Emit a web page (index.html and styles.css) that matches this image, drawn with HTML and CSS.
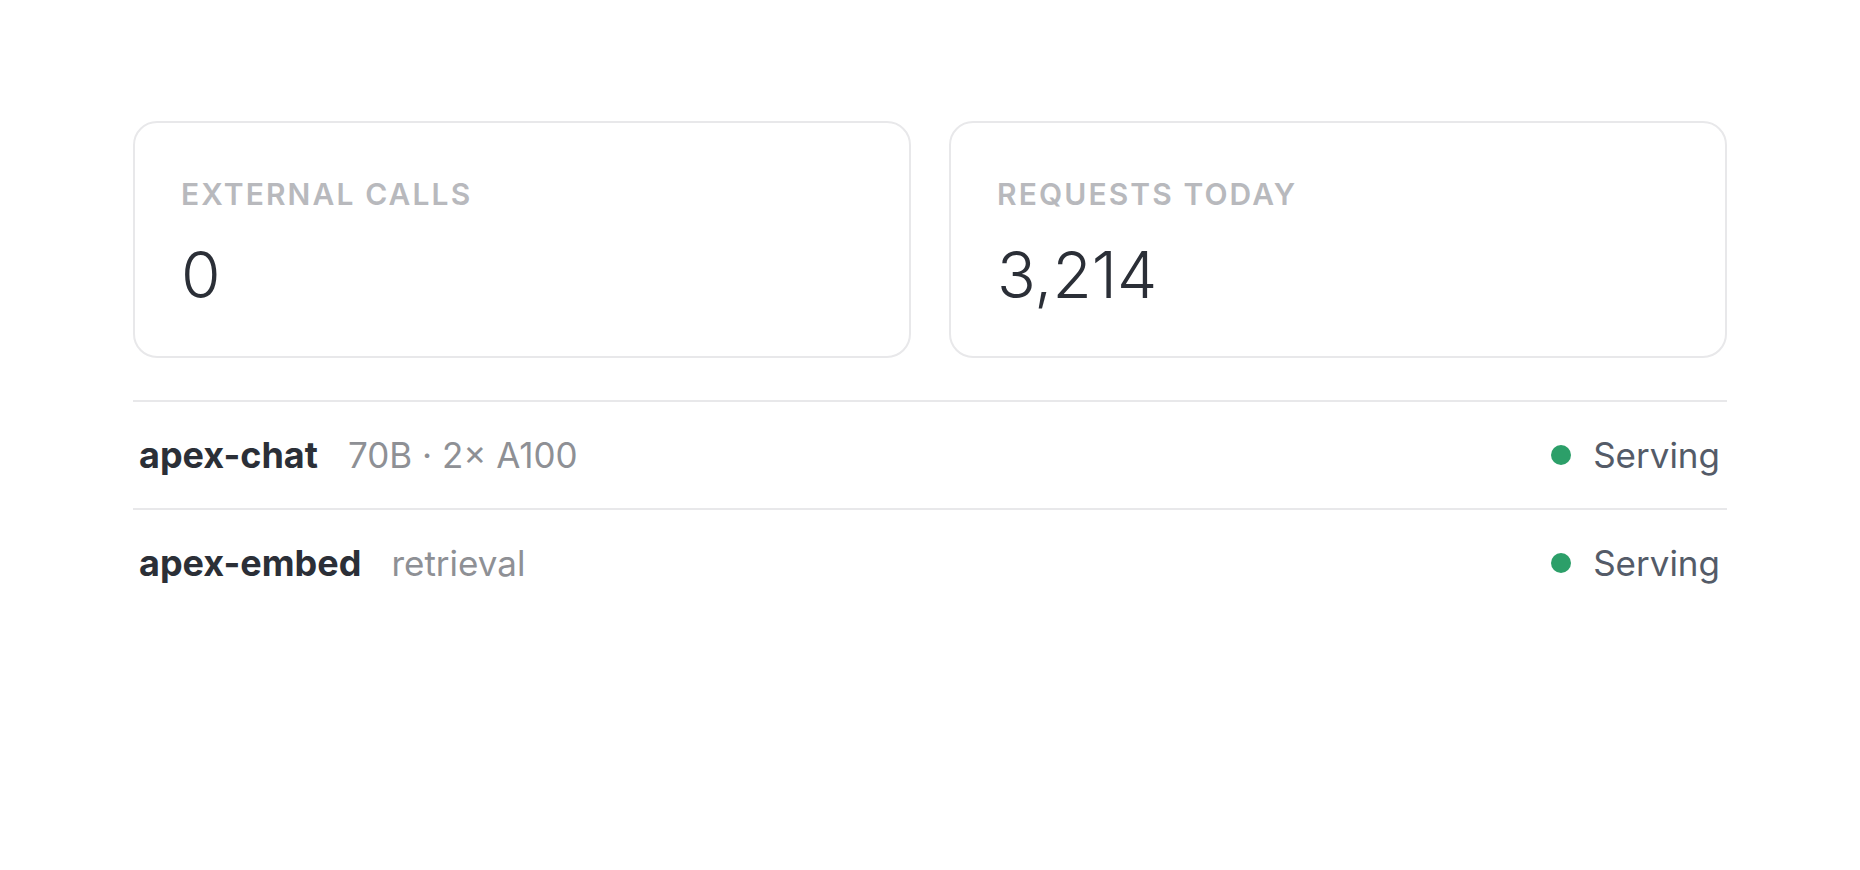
FILE: index.html
```html
<!DOCTYPE html>
<html>
    <head>
        <meta charset="UTF-8">
        <meta name="viewport" content="width=device-width, initial-scale=1">
        <title>Models</title>
        <link rel="stylesheet" href="styles.css">
    </head>
    <body>
        <div class="page">
            <div class="stats">
                <div class="stat-card">
                    <div class="stat-label">External calls</div>
                    <div class="stat-value">0</div>
                </div>
                <div class="stat-card">
                    <div class="stat-label">Requests today</div>
                    <div class="stat-value">3,214</div>
                </div>
            </div>

            <!-- lista de modelos -->
            <div class="model-list">
                <div class="model-row">
                    <span class="model-name">apex-chat</span>
                    <span class="model-meta">70B · 2× A100</span>
                    <span class="model-status"><span class="dot"></span>Serving</span>
                </div>
                <div class="model-row">
                    <span class="model-name">apex-embed</span>
                    <span class="model-meta">retrieval</span>
                    <span class="model-status"><span class="dot"></span>Serving</span>
                </div>
            </div>
        </div>
    </body>
</html>
```

FILE: styles.css
```css
body {
    margin: 0;
    background: #ffffff;
    font-family: Inter, Lato, sans-serif;
    color: #2b2f37;
}
.page {
    padding: 121px 133px;
}
.stats {
    display: grid;
    grid-template-columns: 1fr 1fr;
    gap: 38px;
}
.stat-card {
    border: 2px solid #e8e8ea;
    border-radius: 24px;
    padding: 52px 46px 44px;
    height: 237px;
    box-sizing: border-box;
}
.stat-label {
    font-size: 30px;
    font-weight: 600;
    letter-spacing: 0.07em;
    text-transform: uppercase;
    color: #b8b9bd;
    line-height: 38px;
}
.stat-value {
    font-size: 64px;
    font-weight: 300;
    line-height: 80px;
    margin-top: 22px;
    color: #2b2f37;
}
.model-list {
    margin-top: 42px;
}
.model-row {
    display: flex;
    align-items: center;
    height: 108px;
    box-sizing: border-box;
    border-top: 2px solid #e8e8ea;
    padding: 0 7px 0 6px;
}
.model-name {
    font-size: 36px;
    font-weight: 700;
    color: #2b2f37;
}
.model-meta {
    font-size: 35px;
    color: #8e9095;
    margin-left: 30px;
}
.model-status {
    margin-left: auto;
    display: flex;
    align-items: center;
    font-size: 35px;
    color: #545b68;
}
.dot {
    width: 20px;
    height: 20px;
    border-radius: 50%;
    background: #2c9f69;
    margin-right: 22px;
}
```
